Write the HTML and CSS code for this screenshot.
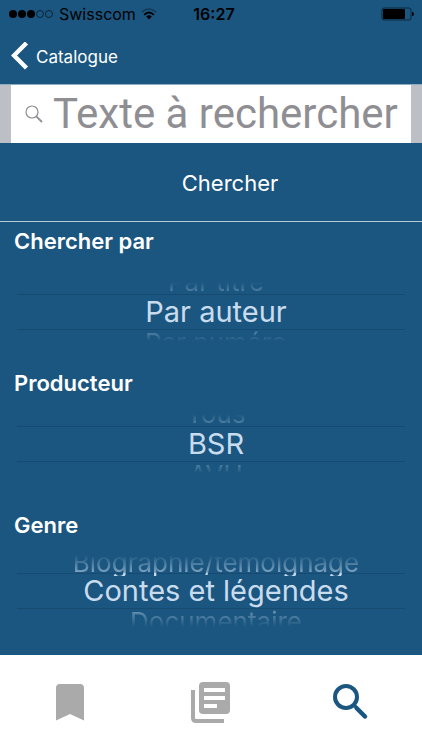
FILE: index.html
```html
<!DOCTYPE html>
<html lang="fr">
<head>
    <meta charset="UTF-8">
    <meta name="viewport" content="width=device-width, initial-scale=1.0">
    <title>Recherche</title>
    <link rel="stylesheet" href="styles.css">
</head>
<body>

    <!-- Status bar -->
    <div class="status">
        <div class="carrier">
            <svg width="46" height="10" viewBox="0 0 46 10" aria-hidden="true">
                <g fill="#000"><circle cx="5" cy="5" r="4"/><circle cx="14" cy="5" r="4"/><circle cx="23" cy="5" r="4"/></g>
                <g fill="none" stroke="#0b2437"><circle cx="32" cy="5" r="3.5"/><circle cx="41" cy="5" r="3.5"/></g>
            </svg>
            <span>Swisscom</span>
            <svg width="16" height="12" viewBox="0 0 16 12" aria-hidden="true">
                <path d="M1 4.2Q8-2.2 15 4.2" fill="none" stroke="#123a59" stroke-width="1.6"/>
                <path d="M3.2 6.8Q8 2.2 12.8 6.8" fill="none" stroke="#000" stroke-width="1.8"/>
                <path d="M5.2 8.6Q8 6 10.8 8.6L8 11.4z"/>
            </svg>
        </div>
        <span class="time">16:27</span>
        <svg class="battery" width="33" height="14" viewBox="0 0 33 14" aria-hidden="true">
            <rect x="1" y="1" width="29" height="12" rx="2" fill="none" stroke="#09263a"/>
            <rect x="2" y="2" width="22" height="10" rx="1"/>
            <path d="M31 5q2 0 2 2t-2 2z"/>
        </svg>
    </div>

    <!-- Navbar -->
    <nav class="navbar">
        <a href="#">
            <svg width="18" height="28" viewBox="0 0 18 28" aria-hidden="true">
                <path d="M15.5 1L3 13.500l12.500 12.500" fill="none" stroke="#fff" stroke-width="4.4"/>
            </svg>
            Catalogue
        </a>
    </nav>

    <!-- Search form -->
    <form class="search-form">
        <div class="search-box">
            <label for="text" aria-label="Texte à rechercher">
                <svg width="18" height="18" viewBox="0 0 18 18" aria-hidden="true">
                    <g fill="none" stroke="#8e8e93"><circle cx="7" cy="7" r="6" stroke-width="1.2"/><path d="M11.3 11.3L17 17" stroke-width="1.8"/></g>
                </svg>
            </label>
            <input type="text" id="text" placeholder="Texte à rechercher">
        </div>
        <button type="submit" class="submit">Chercher</button>

        <fieldset class="picker picker-by">
            <legend>Chercher par</legend>
            <div class="wheel">
                <label class="before"><input type="radio" name="by">Par titre</label>
                <label class="current"><input type="radio" name="by" checked>Par auteur</label>
                <label class="after"><input type="radio" name="by">Par numéro</label>
            </div>
        </fieldset>

        <fieldset class="picker picker-producer">
            <legend>Producteur</legend>
            <div class="wheel">
                <label class="before"><input type="radio" name="producer">Tous</label>
                <label class="current"><input type="radio" name="producer" checked>BSR</label>
                <label class="after"><input type="radio" name="producer">AVH</label>
            </div>
        </fieldset>

        <fieldset class="picker picker-genre">
            <legend>Genre</legend>
            <div class="wheel">
                <label class="before"><input type="radio" name="genre">Biographie/témoignage</label>
                <label class="current"><input type="radio" name="genre" checked>Contes et légendes</label>
                <label class="after"><input type="radio" name="genre">Documentaire</label>
            </div>
        </fieldset>
    </form>

    <!-- Tab bar -->
    <nav class="tabs">
        <a href="#" aria-label="Favoris">
            <svg width="48" height="48" viewBox="0 0 48 48" aria-hidden="true">
                <path d="M14 6h20q4 0 4 4v32.500L24 36 10 42.500V10q0-4 4-4z" fill="#aaa"/>
            </svg>
        </a>
        <a href="#" aria-label="Catalogue">
            <svg width="48" height="48" viewBox="0 0 48 48" aria-hidden="true">
                <path d="M6 12v28q0 3 3 3h28" fill="none" stroke="#aaa" stroke-width="4"/>
                <path d="M16 4h23q4 0 4 4v24q0 4-4 4H16q-4 0-4-4V8q0-4 4-4z" fill="#aaa"/>
                <path d="M17 10h21v4H17zM17 18h21v4H17zM17 26h13v4H17z" fill="#fff"/>
            </svg>
        </a>
        <a href="#" aria-label="Recherche">
            <svg width="48" height="48" viewBox="0 0 48 48" aria-hidden="true">
                <g fill="none" stroke="#1b5680"><circle cx="18" cy="19" r="11" stroke-width="4"/><path d="M26 27l3 3" stroke-width="3"/><path d="M28.500 30l8.500 8.500" stroke-width="4.500" stroke-linecap="round"/></g>
            </svg>
        </a>
    </nav>

</body>
</html>
```
FILE: styles.css
```css
/* General Styles */
* {
    box-sizing: border-box;
}

body {
    font-family: Inter, Roboto, sans-serif;
    background-color: #1b5680;
    color: #fff;
    margin: 0;
    min-height: 100vh;
    display: flex;
    flex-direction: column;
}

svg {
    display: block;
}

/* Status bar */
.status {
    display: grid;
    grid-template-columns: 1fr auto 1fr;
    align-items: center;
    height: 28px;
    padding: 0 8px;
    color: #000;
    font-size: 16px;
}

.carrier {
    display: flex;
    align-items: center;
    gap: 5px;
}

.time {
    font-weight: 600;
    padding-left: 6px;
}

.battery {
    justify-self: end;
}

/* Navbar */
.navbar {
    height: 57px;
    padding: 16px 11px 0;
    border-bottom: 1px solid #8fabc0;
}

.navbar a {
    display: inline-flex;
    align-items: center;
    gap: 7px;
    color: #fff;
    font-size: 17px;
    text-decoration: none;
}

.navbar svg {
    margin-top: -2px;
}

/* Search form */
.search-form {
    flex: 1;
}

.search-box {
    display: flex;
    align-items: center;
    height: 58px;
    padding-left: 14px;
    background-color: #fff;
    border: solid #bdbfc7;
    border-width: 0 11px;
}

.search-box input {
    flex: 1;
    min-width: 0;
    height: 58px;
    padding: 0 0 2px 10px;
    border: none;
    outline: none;
    background: none;
    font-family: Roboto, sans-serif;
    font-size: 42px;
    color: #000;
}

.search-box input::placeholder {
    color: #8e8e93;
    opacity: 1;
}

.submit {
    display: block;
    width: 100%;
    height: 79px;
    padding: 2px 0 0 38px;
    border: none;
    border-bottom: 1px solid #b5c8d6;
    background: none;
    color: #fff;
    font-family: inherit;
    font-size: 22px;
}

/* Pickers */
.picker {
    height: 142px;
    margin: 0;
    padding: 0 17px;
    border: none;
    min-width: 0;
}

.picker legend {
    margin-left: -3px;
    padding: 0;
    font-size: 22px;
    font-weight: 600;
    line-height: 38px;
}

.wheel {
    display: flex;
    flex-direction: column;
    margin-top: 20px;
    text-align: center;
}

.picker-producer .wheel {
    margin-top: 10px;
}

.picker-genre .wheel {
    margin-top: 11px;
}

.wheel label {
    padding-left: 10px;
    overflow: hidden;
    white-space: nowrap;
}

.wheel input {
    position: absolute;
    opacity: 0;
    pointer-events: none;
}

.before,
.after {
    display: flex;
    justify-content: center;
    height: 14px;
    color: #c5dbee;
    font-size: 26px;
    line-height: 26px;
}

.before {
    align-items: flex-end;
    line-height: 24px;
    mask-image: linear-gradient(transparent 15%, rgba(0, 0, 0, 0.4));
}

.after {
    mask-image: linear-gradient(rgba(0, 0, 0, 0.4), transparent 80%);
}

/* descenders of the row above show at full strength inside the selected band */
.picker-genre .before {
    height: 21px;
    margin-bottom: -3px;
    line-height: 26px;
    mask-image: linear-gradient(transparent, rgba(0, 0, 0, 0.6) 18px, #000 18px);
}

.picker-genre .after {
    height: 18px;
    mask-image: linear-gradient(rgba(0, 0, 0, 0.5), transparent);
}

.current {
    height: 36px;
    border: solid #174a70;
    border-width: 1px 0;
    color: #c9dcee;
    font-size: 29px;
    line-height: 34px;
}

/* Tab bar */
.tabs {
    display: flex;
    height: 95px;
    padding-bottom: 2px;
    background-color: #fff;
}

.tabs a {
    flex: 1;
    display: flex;
    align-items: center;
    justify-content: center;
}
```
